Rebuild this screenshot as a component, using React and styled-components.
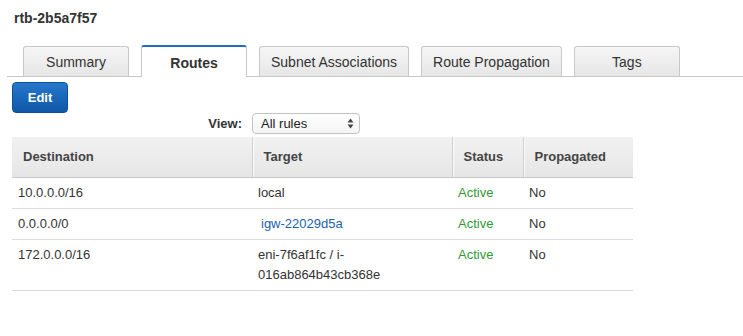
import React from "react";
import styled, { createGlobalStyle } from "styled-components";

const Global = createGlobalStyle`
  html, body { margin: 0; padding: 0; background: #fff; }
  body { font-family: "Liberation Sans", Arial, Helvetica, sans-serif; color: #333; }
`;

const Page = styled.div`
  width: 743px;
  display: flex;
  flex-direction: column;
  align-items: flex-start;
`;

const Title = styled.h1`
  margin: 0;
  padding: 10px 14px 0;
  font-size: 14px;
  line-height: 16px;
  font-weight: bold;
  color: #333;
`;

const TabStrip = styled.div`
  align-self: stretch;
  margin: 19px 0 0 7px;
  padding-left: 16px;
  display: flex;
  align-items: flex-end;
  gap: 12px;
  border-bottom: 1px solid #c8c8c8;
`;

const Tab = styled.div`
  box-sizing: border-box;
  min-width: 106px;
  padding: ${(p) => (p.$active ? "2px 11px 0" : "0 11px")};
  height: ${(p) => (p.$active ? "32px" : "30px")};
  margin-bottom: ${(p) => (p.$active ? "-1px" : "0")};
  display: flex;
  align-items: center;
  justify-content: center;
  font-size: 14px;
  font-weight: ${(p) => (p.$active ? "bold" : "normal")};
  color: #333;
  border: 1px solid #c8c8c8;
  border-bottom: none;
  border-top: ${(p) => (p.$active ? "2px solid #1f6ec2" : "1px solid #c8c8c8")};
  border-radius: 3px 3px 0 0;
  background: ${(p) => (p.$active ? "#fff" : "linear-gradient(#f6f6f6, #e6e6e6)")};
  white-space: nowrap;
`;

const EditButton = styled.button`
  box-sizing: border-box;
  margin: 5px 0 0 12px;
  width: 56px;
  height: 31px;
  border: 1px solid #0d4f98;
  border-radius: 4px;
  background: linear-gradient(#2677cc, #0e57a7);
  color: #fff;
  font-family: inherit;
  font-size: 13px;
  font-weight: bold;
  padding: 0;
`;

const FilterRow = styled.div`
  margin: 0 0 0 12px;
  display: grid;
  grid-template-columns: 240px 108px;
  align-items: center;
`;

const FilterLabel = styled.span`
  text-align: right;
  padding-right: 10px;
  font-size: 13px;
  font-weight: bold;
  color: #333;
`;

const Select = styled.div`
  box-sizing: border-box;
  height: 21px;
  border: 1px solid #c2c2c2;
  border-radius: 4px;
  background: linear-gradient(#ffffff, #f4f4f4);
  display: flex;
  align-items: center;
  justify-content: space-between;
  padding: 0 5px 0 8px;
  font-size: 13px;
  color: #222;
`;

const Table = styled.table`
  margin: 3px 0 0 12px;
  width: 621px;
  border-collapse: collapse;
  table-layout: fixed;
  font-size: 13px;
`;

const HeadCell = styled.th`
  box-sizing: border-box;
  height: 40px;
  padding: 0 11px;
  text-align: left;
  font-weight: bold;
  color: #444;
  background: linear-gradient(#f1f1f1, #e6e6e6);
  border-bottom: 1px solid #c6c6c6;
  border-left: ${(p) => (p.$first ? "none" : "1px solid #cfcfcf")};
  box-shadow: ${(p) => (p.$first ? "none" : "inset 1px 0 #fbfbfb")};
`;

const Row = styled.tr`
  border-bottom: 1px solid #dcdcdc;
`;

const Cell = styled.td`
  padding: 5px 6px;
  line-height: 20px;
  vertical-align: top;
  color: ${(p) => (p.$tone === "active" ? "#2f9a36" : "#333")};
`;

const Link = styled.a`
  color: #1c5fae;
  text-decoration: none;
  padding-left: 3px;
`;

const Arrows = () => (
  <svg width="7" height="11" viewBox="0 0 7 11" aria-hidden="true">
    <path d="M3.5 0.5 L6.5 4.5 H0.5 Z" fill="#444" />
    <path d="M3.5 10.5 L6.5 6.5 H0.5 Z" fill="#444" />
  </svg>
);

const tabs = ["Summary", "Routes", "Subnet Associations", "Route Propagation", "Tags"];

const routes = [
  { dest: "10.0.0.0/16", target: "local" },
  { dest: "0.0.0.0/0", target: "igw-22029d5a", link: true },
  {
    dest: "172.0.0.0/16",
    target: (
      <>
        eni-7f6af1fc / i-<wbr />016ab864b43cb368e
      </>
    ),
  },
];

export default function App() {
  return (
    <Page>
      <Global />
      <Title>rtb-2b5a7f57</Title>
      <TabStrip>
        {tabs.map((t) => (
          <Tab key={t} $active={t === "Routes"}>
            {t}
          </Tab>
        ))}
      </TabStrip>
      <EditButton>Edit</EditButton>
      <FilterRow>
        <FilterLabel>View:</FilterLabel>
        <Select>
          <span>All rules</span>
          <Arrows />
        </Select>
      </FilterRow>
      <Table>
        <colgroup>
          <col style={{ width: 240 }} />
          <col style={{ width: 200 }} />
          <col style={{ width: 71 }} />
          <col style={{ width: 110 }} />
        </colgroup>
        <thead>
          <tr>
            <HeadCell $first>Destination</HeadCell>
            <HeadCell>Target</HeadCell>
            <HeadCell>Status</HeadCell>
            <HeadCell>Propagated</HeadCell>
          </tr>
        </thead>
        <tbody>
          {routes.map((r) => (
            <Row key={r.dest}>
              <Cell>{r.dest}</Cell>
              <Cell>{r.link ? <Link href="#">{r.target}</Link> : r.target}</Cell>
              <Cell $tone="active">Active</Cell>
              <Cell>No</Cell>
            </Row>
          ))}
        </tbody>
      </Table>
    </Page>
  );
}
